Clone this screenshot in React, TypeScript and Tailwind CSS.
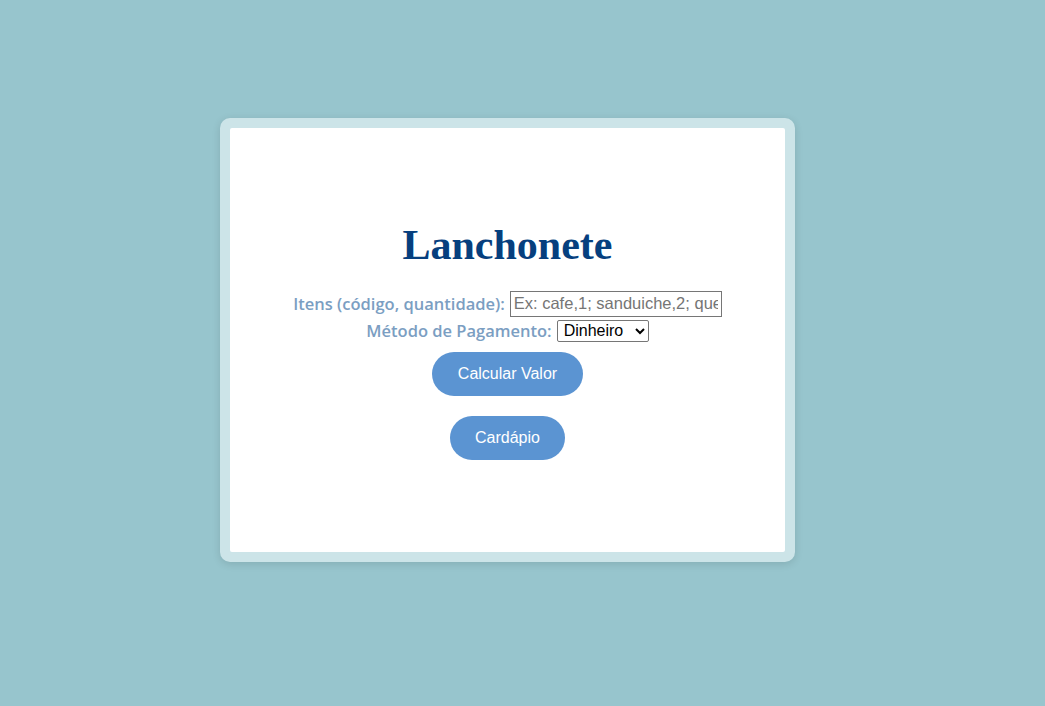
export default function App() {
  return (
    <div className="min-h-screen w-full bg-[#97c5cd] flex items-center justify-center pb-[26px] pr-[30px]">
      <div className="w-[575px] h-[444px] rounded-[10px] bg-[#cce4e8] p-[10px] shadow-[0_2px_8px_rgba(0,0,0,0.12)]">
        <div className="h-full w-full bg-white rounded-[2px] flex flex-col items-center justify-center">
          <h1 className="font-['Liberation_Serif',serif] font-bold text-[42px] leading-none text-[#063f7e] mb-[25px] mt-[3px]">
            Lanchonete
          </h1>
          <div className="flex flex-col items-center gap-[3px] font-['Open_Sans',sans-serif] text-[16.5px] leading-[22px] font-semibold text-[#7b9ec2]">
            <div className="flex items-center gap-[5px]">
              <label>Itens (código, quantidade):</label>
              <input
                type="text"
                placeholder="Ex: cafe,1; sanduiche,2; queijo,1"
                className="w-[212px] h-[26px] border border-[#767676] px-[3px] font-['Liberation_Sans',sans-serif] font-normal text-[16.5px] text-black placeholder:text-[#757575] outline-none"
              />
            </div>
            <div className="flex items-center gap-[5px]">
              <label>Método de Pagamento:</label>
              <select className="w-[92px] h-[22px] border border-[#767676] rounded-[2px] px-[2px] font-['Liberation_Sans',sans-serif] font-normal text-[16px] text-black bg-white appearance-auto">
                <option>Dinheiro</option>
                <option>Débito</option>
                <option>Crédito</option>
              </select>
            </div>
          </div>
          <button className="mt-[10px] w-[151px] h-[44px] rounded-full bg-[#5b94d2] text-white font-['Liberation_Sans',sans-serif] text-[16px]">
            Calcular Valor
          </button>
          <button className="mt-[20px] w-[115px] h-[44px] rounded-full bg-[#5b94d2] text-white font-['Liberation_Sans',sans-serif] text-[16px]">
            Cardápio
          </button>
        </div>
      </div>
    </div>
  );
}
